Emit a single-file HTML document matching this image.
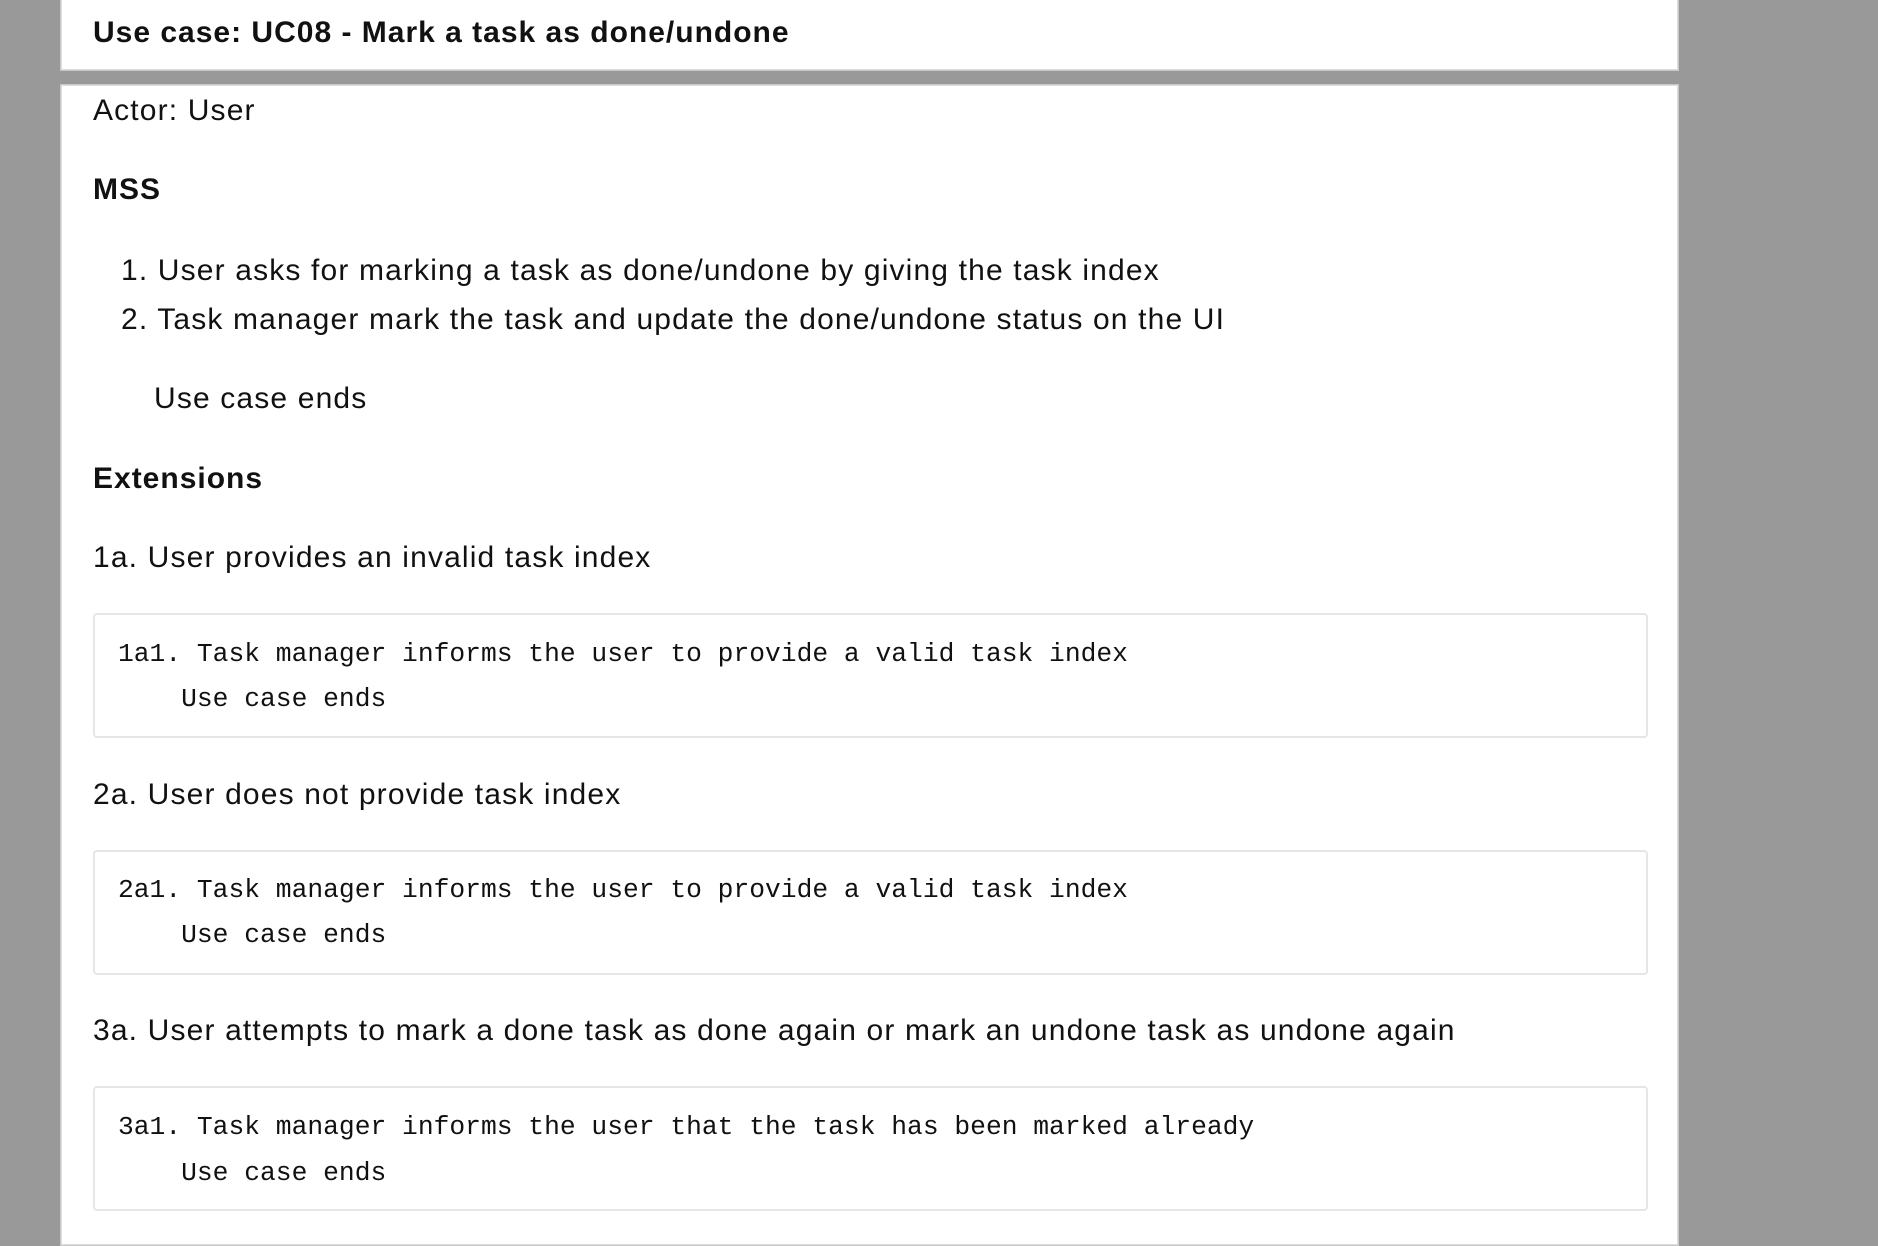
<!DOCTYPE html>
<html><head><meta charset="utf-8"><style>
html,body{margin:0;padding:0}
body{width:1878px;height:1226px;background:#999;position:relative;overflow:hidden;font-family:"Liberation Sans",sans-serif;color:#111}
.p{position:absolute;left:60px;width:1617px;background:#fff;border:1px solid #c8c8c8;box-shadow:inset 0 0 0 1px #ddd}
.t{position:absolute;white-space:nowrap;line-height:40px}
.b{font-weight:bold;font-size:30px;letter-spacing:1px}
.n{font-size:30px;letter-spacing:1.15px}
.box{position:absolute;left:93px;width:1551px;height:121px;border:2px solid #e6e6e6;border-radius:4px;background:#fff}
.m{position:absolute;left:118px;font-family:"Liberation Mono",monospace;font-size:26.3px;line-height:40px;white-space:pre;color:#111}
</style></head><body>
<div class="p" style="top:-2px;height:71px"></div>
<div class="p" style="top:84px;height:1160px"></div>
<div class="t b" style="left:93px;top:13px">Use case: UC08 - Mark a task as done/undone</div>
<div class="t n" style="left:93px;top:91px">Actor: User</div>
<div class="t b" style="left:93px;top:170px">MSS</div>
<div class="t n" style="left:121px;top:251px">1. User asks for marking a task as done/undone by giving the task index</div>
<div class="t n" style="left:121px;top:300px">2. Task manager mark the task and update the done/undone status on the UI</div>
<div class="t n" style="left:154px;top:379px">Use case ends</div>
<div class="t b" style="left:93px;top:459px">Extensions</div>
<div class="t n" style="left:93px;top:538px">1a. User provides an invalid task index</div>
<div class="box" style="top:613px"></div>
<div class="m" style="top:634px">1a1. Task manager informs the user to provide a valid task index</div>
<div class="m" style="top:679px">    Use case ends</div>
<div class="t n" style="left:93px;top:775px">2a. User does not provide task index</div>
<div class="box" style="top:850px"></div>
<div class="m" style="top:870px">2a1. Task manager informs the user to provide a valid task index</div>
<div class="m" style="top:915px">    Use case ends</div>
<div class="t n" style="left:93px;top:1011px">3a. User attempts to mark a done task as done again or mark an undone task as undone again</div>
<div class="box" style="top:1086px"></div>
<div class="m" style="top:1107px">3a1. Task manager informs the user that the task has been marked already</div>
<div class="m" style="top:1153px">    Use case ends</div>
</body></html>
